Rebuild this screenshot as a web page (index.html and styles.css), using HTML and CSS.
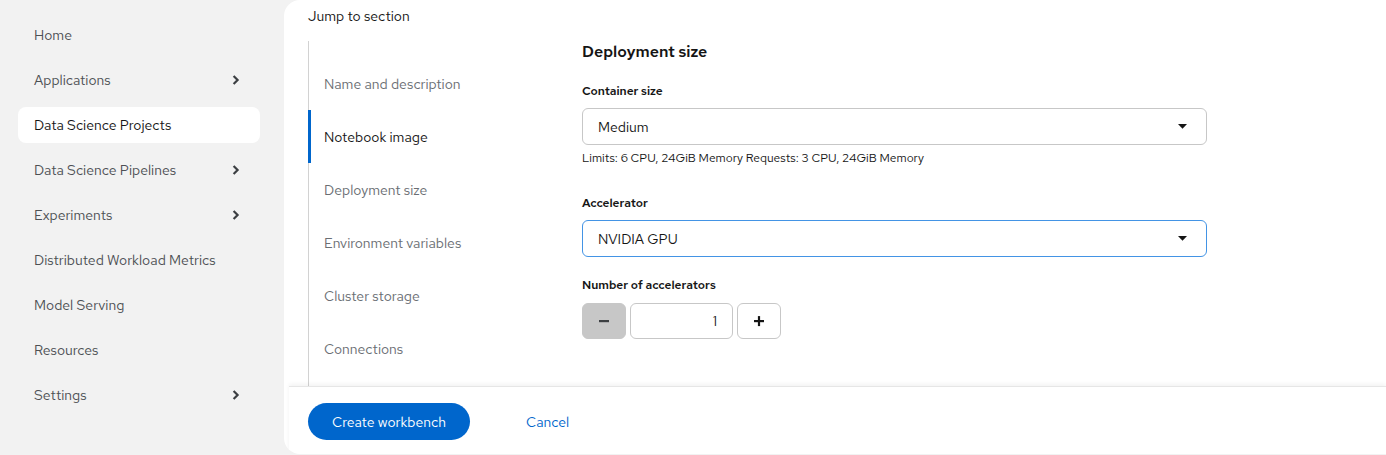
FILE: index.html
```html
<!DOCTYPE html>
<html>
<head>
<meta charset="utf-8">
<link rel="stylesheet" href="styles.css">
</head>
<body>
<nav class="sidebar">
  <div class="nav-item">Home</div>
  <div class="nav-item">Applications<svg class="chev" viewBox="0 0 8 10"><path d="M1.6 1 L5.6 5 L1.6 9" /></svg></div>
  <div class="nav-item active">Data Science Projects</div>
  <div class="nav-item">Data Science Pipelines<svg class="chev" viewBox="0 0 8 10"><path d="M1.6 1 L5.6 5 L1.6 9" /></svg></div>
  <div class="nav-item">Experiments<svg class="chev" viewBox="0 0 8 10"><path d="M1.6 1 L5.6 5 L1.6 9" /></svg></div>
  <div class="nav-item">Distributed Workload Metrics</div>
  <div class="nav-item">Model Serving</div>
  <div class="nav-item">Resources</div>
  <div class="nav-item">Settings<svg class="chev" viewBox="0 0 8 10"><path d="M1.6 1 L5.6 5 L1.6 9" /></svg></div>
</nav>
<main class="panel">
  <div class="content">
    <div class="jump-title">Jump to section</div>
    <div class="columns">
      <ul class="jump-list">
        <li>Name and description</li>
        <li class="current">Notebook image</li>
        <li>Deployment size</li>
        <li>Environment variables</li>
        <li>Cluster storage</li>
        <li>Connections</li>
      </ul>
      <form class="form">
        <h2 class="section-title">Deployment size</h2>
        <label class="label">Container size</label>
        <div class="select">
          <span>Medium</span>
          <svg class="caret" viewBox="0 0 9 5"><path d="M0 0 H9 L4.5 4.8 Z" /></svg>
        </div>
        <div class="helper">Limits: 6 CPU, 24GiB Memory Requests: 3 CPU, 24GiB Memory</div>
        <label class="label accel-label">Accelerator</label>
        <div class="select focused">
          <span>NVIDIA GPU</span>
          <svg class="caret" viewBox="0 0 9 5"><path d="M0 0 H9 L4.5 4.8 Z" /></svg>
        </div>
        <label class="label count-label">Number of accelerators</label>
        <div class="number">
          <button type="button" class="num-btn disabled"><svg viewBox="0 0 12 12"><rect x="1" y="5" width="10" height="2.2" /></svg></button>
          <div class="num-input">1</div>
          <button type="button" class="num-btn"><svg viewBox="0 0 12 12"><rect x="1" y="5" width="10" height="2.2" /><rect x="4.9" y="1.1" width="2.2" height="10" /></svg></button>
        </div>
      </form>
    </div>
  </div>
  <footer class="footer">
    <button type="button" class="primary">Create workbench</button>
    <button type="button" class="link">Cancel</button>
  </footer>
</main>
</body>
</html>
```
FILE: styles.css
```css
* { box-sizing: border-box; }
html, body { margin: 0; padding: 0; }
body {
  width: 1386px;
  height: 455px;
  overflow: hidden;
  display: flex;
  background: #f2f2f2;
  font-family: "Red Hat Text", "Liberation Sans", Arial, sans-serif;
  font-size: 14px;
  color: #151515;
}
.sidebar {
  width: 284px;
  flex: none;
  padding: 17px 24px 0 18px;
  display: flex;
  flex-direction: column;
  gap: 9px;
}
.nav-item {
  height: 36px;
  display: flex;
  align-items: center;
  justify-content: space-between;
  padding: 0 20px 0 16px;
  border-radius: 8px;
  color: #4d5054;
}
.nav-item.active {
  background: #fff;
  color: #151515;
}
.chev {
  width: 8px;
  height: 10px;
  fill: none;
  stroke: #3c3f42;
  stroke-width: 2.2;
}
.panel {
  flex: 1;
  background: #fff;
  border-radius: 16px 0 0 16px;
  height: 454px;
  display: flex;
  flex-direction: column;
  overflow: hidden;
}
.content {
  flex: 1;
  padding: 6px 0 0 24px;
  display: flex;
  flex-direction: column;
  min-height: 0;
}
.jump-title {
  height: 20px;
  line-height: 20px;
}
.columns {
  flex: 1;
  display: flex;
  margin-top: 15px;
}
.jump-list {
  list-style: none;
  margin: 0;
  padding: 16px 0 0 0;
  width: 274px;
  flex: none;
  border-left: 1px solid #d2d2d2;
}
.jump-list li {
  height: 53px;
  display: flex;
  align-items: center;
  padding-left: 15px;
  color: #6a6e73;
  position: relative;
}
.jump-list li.current {
  color: #151515;
}
.jump-list li.current::before {
  content: "";
  position: absolute;
  left: -1px;
  top: 0;
  bottom: 0;
  width: 3px;
  background: #0066cc;
}
.form {
  width: 625px;
  display: flex;
  flex-direction: column;
}
.section-title {
  margin: -1px 0 0 0;
  font-size: 16px;
  font-weight: 600;
  line-height: 24px;
  color: #151515;
}
.label {
  font-size: 12px;
  font-weight: 600;
  line-height: 18px;
  margin-top: 18px;
  margin-bottom: 8px;
}
.accel-label { margin-top: 28px; }
.count-label { margin-top: 19px; margin-bottom: 9px; }
.select {
  height: 37px;
  border: 1px solid #c7c7c7;
  border-radius: 6px;
  display: flex;
  align-items: center;
  justify-content: space-between;
  padding: 0 19px 0 15px;
}
.select.focused {
  border-color: #4394e5;
}
.caret {
  width: 9px;
  height: 5px;
  fill: #151515;
}
.helper {
  font-size: 12px;
  line-height: 16px;
  margin-top: 5px;
  color: #151515;
}
.number {
  display: flex;
  gap: 4px;
}
.num-btn {
  width: 44px;
  height: 36px;
  border: 1px solid #c7c7c7;
  background: #fff;
  border-radius: 6px;
  display: flex;
  align-items: center;
  justify-content: center;
  padding: 0;
}
.num-btn svg {
  width: 12px;
  height: 12px;
  fill: #151515;
}
.num-btn.disabled {
  background: #c7c7c7;
  border-color: #c7c7c7;
}
.num-btn.disabled svg { fill: #3c3f42; }
.num-input {
  width: 103px;
  height: 36px;
  border: 1px solid #c7c7c7;
  border-radius: 6px;
  display: flex;
  align-items: center;
  justify-content: flex-end;
  padding-right: 15px;
}
.footer {
  height: 68px;
  flex: none;
  margin-left: 5px;
  border-top: 1px solid #e6e6e6;
  box-shadow: 0 -2px 4px rgba(0,0,0,0.05);
  display: flex;
  align-items: flex-start;
  padding: 16px 0 0 19px;
}
.primary {
  height: 37px;
  padding: 0 24px;
  border: none;
  border-radius: 19px;
  background: #0066cc;
  color: #fff;
  font: inherit;
  width: 162px;
}
.link {
  border: none;
  background: none;
  color: #0066cc;
  font: inherit;
  margin-left: 40px;
  padding: 0 16px;
  height: 37px;
}
```
